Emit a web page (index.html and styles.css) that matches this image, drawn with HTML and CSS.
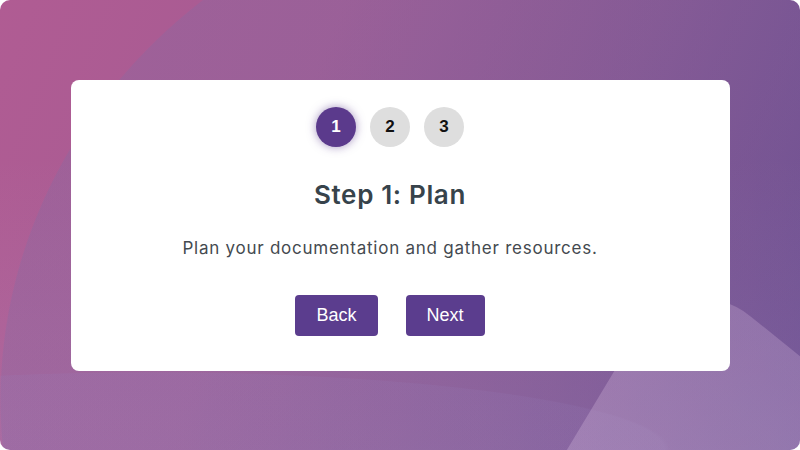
FILE: index.html
```html
<!DOCTYPE html>
<html lang="en">
<head>
<meta charset="utf-8">
<title>Steps</title>
<link rel="stylesheet" href="styles.css">
</head>
<body>
<div class="page">
  <div class="card">
    <div class="steps">
      <span class="step active">1</span>
      <span class="step">2</span>
      <span class="step">3</span>
    </div>
    <h2 class="title">Step 1: Plan</h2>
    <p class="desc">Plan your documentation and gather resources.</p>
    <div class="actions">
      <button class="btn">Back</button>
      <button class="btn">Next</button>
    </div>
  </div>
</div>
</body>
</html>
```
FILE: styles.css
```css
html, body {
  margin: 0;
  padding: 0;
  background: #ffffff;
}
.page {
  position: relative;
  width: 800px;
  height: 450px;
  border-radius: 10px;
  overflow: hidden;
  display: flex;
  align-items: center;
  justify-content: center;
  background:
    radial-gradient(ellipse 520px 78px at 150px 450px, rgba(150, 125, 185, 0.16) 99%, rgba(150, 125, 185, 0) 100%),
    radial-gradient(ellipse 560px 520px at 560px 400px, rgba(128, 108, 165, 0.3) 99.8%, rgba(128, 108, 165, 0) 100%),
    linear-gradient(to bottom, rgba(190, 160, 205, 0) 35%, rgba(190, 160, 205, 0.18) 100%),
    linear-gradient(112deg, #b05c93 0%, #a65b93 35%, #87538f 68%, #64458a 100%);
  font-family: Inter, "Noto Sans", sans-serif;
}
.page::before {
  content: "";
  position: absolute;
  left: 681px;
  top: 260px;
  width: 520px;
  height: 520px;
  border-radius: 90px;
  background: linear-gradient(180deg, rgba(200, 170, 210, 0.32), rgba(215, 190, 222, 0.38));
  transform-origin: 0 0;
  transform: rotate(39deg) skewX(8deg);
  z-index: 0;
}
.card {
  position: relative;
  z-index: 1;
  width: 659px;
  height: 291px;
  box-sizing: border-box;
  background: #ffffff;
  border-radius: 8px;
  padding: 27px 20px 0 0;
  display: flex;
  flex-direction: column;
  align-items: center;
}
.steps {
  display: flex;
  gap: 14px;
}
.step {
  width: 40px;
  height: 40px;
  border-radius: 50%;
  background: #dedede;
  color: #111111;
  font-family: "Liberation Sans", Arial, sans-serif;
  font-weight: 700;
  font-size: 17px;
  display: flex;
  align-items: center;
  justify-content: center;
}
.step.active {
  background: #5b3a8c;
  color: #ffffff;
  box-shadow: 0 0 10px rgba(91, 58, 140, 0.55);
}
.title {
  margin: 32px 0 0;
  font-size: 26px;
  line-height: 32px;
  font-weight: 600;
  letter-spacing: 0.65px;
  color: #37434b;
}
.desc {
  margin: 25px 0 0;
  font-size: 17px;
  line-height: 24px;
  letter-spacing: 0.75px;
  color: #444a50;
}
.actions {
  display: flex;
  gap: 28px;
  margin-top: 35px;
}
.btn {
  font-family: "Liberation Sans", Arial, sans-serif;
  font-size: 18px;
  line-height: 21px;
  padding: 10px 21px;
  height: 41px;
  color: #ffffff;
  background: #5b3d8e;
  border: none;
  border-radius: 4px;
}
```
